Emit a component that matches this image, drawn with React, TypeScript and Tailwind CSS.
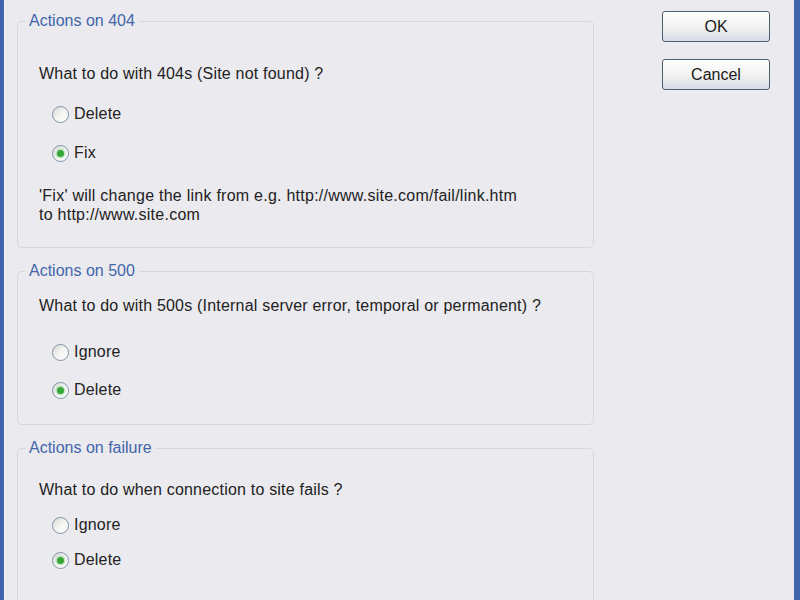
import React from "react";

const font = { fontFamily: '"Liberation Sans", Arial, sans-serif' };

// XP-style radio button
const Radio = ({ label, checked }: { label: string; checked?: boolean }) => (
  <div className="flex h-[18px] items-center gap-[5px]">
    <span className="flex h-[17px] w-[17px] shrink-0 items-center justify-center rounded-full border border-[#8193a6] bg-gradient-to-br from-[#d9d9d3] via-[#f4f4f2] to-white">
      {checked && <span className="h-[7px] w-[7px] rounded-full bg-[#38a538] shadow-[0_0_2px_1px_#a8dca8]" />}
    </span>
    <span className="text-[16px] leading-[18px] tracking-[0.2px] text-[#222]">{label}</span>
  </div>
);

const Group = ({
  title,
  className,
  bodyClass,
  children,
}: {
  title: string;
  className: string;
  bodyClass: string;
  children: React.ReactNode;
}) => (
  <fieldset className={`rounded-[5px] border border-[#d3d8dd] ${className}`}>
    <legend className="ml-[7px] px-[4px] text-[16px] leading-[18px] text-[#4266a9]">{title}</legend>
    <div className={`pl-[21px] ${bodyClass}`}>{children}</div>
  </fieldset>
);

const XpButton = ({ label }: { label: string }) => (
  <button className="h-[31px] w-[108px] rounded-[3px] border border-[#4f5f70] bg-gradient-to-b from-white via-[#f3f3f1] to-[#d6dbe6] text-[16px] text-[#1a1a1a]">
    {label}
  </button>
);

export default function App() {
  return (
    <div
      className="flex h-[600px] w-[800px] overflow-hidden border-l-[4px] border-r-[6px] border-[#3e64ab] bg-[#ebeaef]"
      style={font}
    >
      <div className="flex w-[590px] shrink-0 flex-col border-l border-[#f6f6f8] pl-[12px] pt-[12px]">
        <Group title="Actions on 404" className="" bodyClass="h-[217px] pt-[35px]">
          <p className="text-[16px] leading-[18px] tracking-[0.2px] text-[#222]">What to do with 404s (Site not found) ?</p>
          <div className="ml-[13px] mt-[22px] flex flex-col gap-[21px]">
            <Radio label="Delete" />
            <Radio label="Fix" checked />
          </div>
          <p className="mt-[24px] text-[16px] leading-[19px] tracking-[0.25px] text-[#222]">
            'Fix' will change the link from e.g. http://www.site.com/fail/link.htm
            <br />
            to http://www.site.com
          </p>
        </Group>
        <Group title="Actions on 500" className="mt-[14px]" bodyClass="h-[144px] pt-[17px]">
          <p className="text-[16px] leading-[18px] tracking-[0.2px] text-[#222]">
            What to do with 500s (Internal server error, temporal or permanent) ?
          </p>
          <div className="ml-[13px] mt-[28px] flex flex-col gap-[20px]">
            <Radio label="Ignore" />
            <Radio label="Delete" checked />
          </div>
        </Group>
        <Group title="Actions on failure" className="mt-[14px]" bodyClass="h-[200px] pt-[24px]">
          <p className="text-[16px] leading-[18px] tracking-[0.2px] text-[#222]">What to do when connection to site fails ?</p>
          <div className="ml-[13px] mt-[17px] flex flex-col gap-[17px]">
            <Radio label="Ignore" />
            <Radio label="Delete" checked />
          </div>
        </Group>
      </div>
      <div className="ml-[68px] flex flex-col gap-[17px] pt-[11px]">
        <XpButton label="OK" />
        <XpButton label="Cancel" />
      </div>
    </div>
  );
}
